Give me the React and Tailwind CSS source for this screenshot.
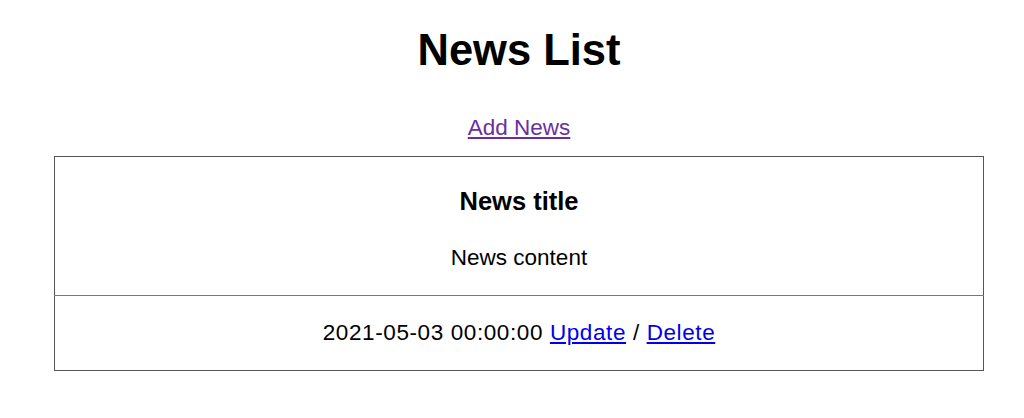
export default function App() {
  return (
    <div className="min-h-[418px] bg-white text-black" style={{ fontFamily: '"Liberation Sans", Arial, sans-serif' }}>
      <div className="ml-[54px] w-[930px] flex flex-col items-center">
        <h1 className="mt-[24px] text-[43.5px] font-bold leading-[52px]">News List</h1>
        <a href="#" className="mt-[39px] text-[22.5px] leading-[26px] text-[#6b2fa0] underline">Add News</a>
        <table className="mt-[15px] w-full border border-[#555] border-collapse">
          <tbody>
            <tr className="border-b border-[#777]">
              <td className="h-[139px] text-center align-top pt-[29px]">
                <h3 className="text-[25.5px] font-bold leading-[30px]">News title</h3>
                <p className="mt-[29px] text-[22.5px] leading-[26px]">News content</p>
              </td>
            </tr>
            <tr>
              <td className="h-[75px] text-center align-middle text-[22.5px] leading-[26px] tracking-[0.6px]">
                2021-05-03 00:00:00{' '}
                <a href="#" className="text-[#0000ee] underline">Update</a> /{' '}
                <a href="#" className="text-[#0000ee] underline">Delete</a>
              </td>
            </tr>
          </tbody>
        </table>
      </div>
    </div>
  );
}
